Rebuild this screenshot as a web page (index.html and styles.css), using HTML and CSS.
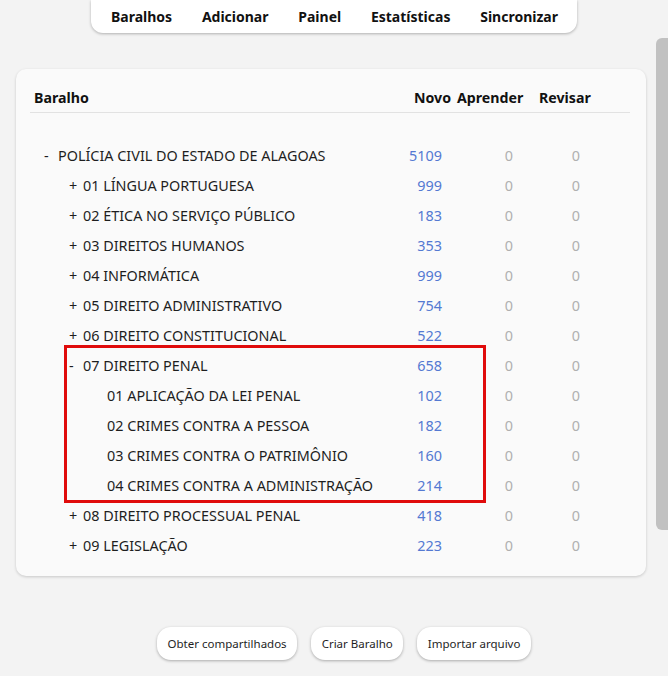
FILE: index.html
```html
<!DOCTYPE html>
<html lang="pt">
<head>
<meta charset="utf-8">
<title>Baralhos</title>
<link rel="stylesheet" href="styles.css">
</head>
<body>
<nav class="topbar">
  <a class="nav-item">Baralhos</a>
  <a class="nav-item">Adicionar</a>
  <a class="nav-item">Painel</a>
  <a class="nav-item">Estatísticas</a>
  <a class="nav-item">Sincronizar</a>
</nav>

<main class="card">
  <div class="decks">
    <div class="row head">
      <div class="c-name">Baralho</div>
      <div class="c-new">Novo</div>
      <div class="c-learn">Aprender</div>
      <div class="c-rev">Revisar</div>
    </div>
    <div class="spacer"></div>

    <div class="row"><div class="c-name l0"><span class="sign">-</span>POLÍCIA CIVIL DO ESTADO DE ALAGOAS</div><div class="c-new">5109</div><div class="c-learn">0</div><div class="c-rev">0</div></div>
    <div class="row"><div class="c-name l1"><span class="sign">+</span>01 LÍNGUA PORTUGUESA</div><div class="c-new">999</div><div class="c-learn">0</div><div class="c-rev">0</div></div>
    <div class="row"><div class="c-name l1"><span class="sign">+</span>02 ÉTICA NO SERVIÇO PÚBLICO</div><div class="c-new">183</div><div class="c-learn">0</div><div class="c-rev">0</div></div>
    <div class="row"><div class="c-name l1"><span class="sign">+</span>03 DIREITOS HUMANOS</div><div class="c-new">353</div><div class="c-learn">0</div><div class="c-rev">0</div></div>
    <div class="row"><div class="c-name l1"><span class="sign">+</span>04 INFORMÁTICA</div><div class="c-new">999</div><div class="c-learn">0</div><div class="c-rev">0</div></div>
    <div class="row"><div class="c-name l1"><span class="sign">+</span>05 DIREITO ADMINISTRATIVO</div><div class="c-new">754</div><div class="c-learn">0</div><div class="c-rev">0</div></div>
    <div class="row"><div class="c-name l1"><span class="sign">+</span>06 DIREITO CONSTITUCIONAL</div><div class="c-new">522</div><div class="c-learn">0</div><div class="c-rev">0</div></div>
    <div class="row"><div class="c-name l1"><span class="sign">-</span>07 DIREITO PENAL</div><div class="c-new">658</div><div class="c-learn">0</div><div class="c-rev">0</div></div>
    <div class="row"><div class="c-name l2"><span class="sign"></span>01 APLICAÇÃO DA LEI PENAL</div><div class="c-new">102</div><div class="c-learn">0</div><div class="c-rev">0</div></div>
    <div class="row"><div class="c-name l2"><span class="sign"></span>02 CRIMES CONTRA A PESSOA</div><div class="c-new">182</div><div class="c-learn">0</div><div class="c-rev">0</div></div>
    <div class="row"><div class="c-name l2"><span class="sign"></span>03 CRIMES CONTRA O PATRIMÔNIO</div><div class="c-new">160</div><div class="c-learn">0</div><div class="c-rev">0</div></div>
    <div class="row"><div class="c-name l2"><span class="sign"></span>04 CRIMES CONTRA A ADMINISTRAÇÃO</div><div class="c-new">214</div><div class="c-learn">0</div><div class="c-rev">0</div></div>
    <div class="row"><div class="c-name l1"><span class="sign">+</span>08 DIREITO PROCESSUAL PENAL</div><div class="c-new">418</div><div class="c-learn">0</div><div class="c-rev">0</div></div>
    <div class="row"><div class="c-name l1"><span class="sign">+</span>09 LEGISLAÇÃO</div><div class="c-new">223</div><div class="c-learn">0</div><div class="c-rev">0</div></div>
  </div>
  <div class="highlight"></div>
</main>

<footer class="actions">
  <button class="btn">Obter compartilhados</button>
  <button class="btn">Criar Baralho</button>
  <button class="btn">Importar arquivo</button>
</footer>

<div class="scrollthumb"></div>
</body>
</html>
```

FILE: styles.css
```css
html, body {
  margin: 0;
  padding: 0;
}
body {
  background: #f3f3f3;
  font-family: "Noto Sans", "Open Sans", sans-serif;
  color: #1e1e1e;
  width: 668px;
  height: 676px;
  overflow: hidden;
  position: relative;
}

.topbar {
  width: 486px;
  height: 33px;
  margin: 0 0 0 91px;
  box-sizing: border-box;
  background: #ffffff;
  border-radius: 0 0 12px 12px;
  box-shadow: 0 1px 3px rgba(0,0,0,0.28);
  display: flex;
  align-items: center;
  justify-content: space-between;
  padding: 0 19px 1px 20px;
}
.nav-item {
  font-weight: 700;
  font-size: 14px;
  color: #111;
}

.card {
  position: relative;
  margin: 36px 0 0 16px;
  width: 630px;
  box-sizing: border-box;
  background: #fafafa;
  border-radius: 10px;
  box-shadow: 0 1px 3px rgba(0,0,0,0.18);
  padding: 14px 16px 16px 14px;
}

.row {
  display: grid;
  grid-template-columns: 375px 48px 74px 73px 30px;
  height: 30px;
  align-items: center;
  font-size: 14.4px;
}
.row.head {
  height: 29px;
  font-size: 14.2px;
  font-weight: 700;
  border-bottom: 1px solid #e2e2e2;
  color: #111;
}
.head .c-name { padding-left: 4px; }
.head .c-new { text-align: right; padding-right: 2px; color: #111; }
.head .c-learn { text-align: left; padding: 0 0 0 4px; color: #111; }
.head .c-rev { text-align: left; padding: 0 0 0 12px; color: #111; }

.spacer { height: 27px; }

.c-name { white-space: nowrap; }
.c-name.l0 { padding-left: 14px; }
.c-name.l1 { padding-left: 39px; }
.c-name.l2 { padding-left: 63px; }
.sign {
  display: inline-block;
  width: 14px;
}

.c-new {
  text-align: right;
  padding-right: 11px;
  color: #5479d2;
}
.c-learn {
  text-align: right;
  padding-right: 14px;
  color: #b0b0b0;
}
.c-rev {
  text-align: right;
  padding-right: 20px;
  color: #b0b0b0;
}

.highlight {
  position: absolute;
  left: 48px;
  top: 276px;
  width: 422px;
  height: 158px;
  box-sizing: border-box;
  border: 3px solid #e00b0b;
}

.actions {
  display: flex;
  gap: 14px;
  margin: 51px 0 0 157px;
}
.btn {
  font-family: "Noto Sans", "Open Sans", sans-serif;
  font-size: 11.5px;
  color: #1e1e1e;
  background: #ffffff;
  border: none;
  margin: 0;
  border-radius: 14px;
  box-shadow: 0 1px 3px rgba(0,0,0,0.3);
  height: 33px;
  padding: 0 10.5px;
}

.scrollthumb {
  position: absolute;
  right: 0;
  top: 38px;
  width: 12px;
  height: 492px;
  background: #c1c1c1;
  border-radius: 6px 0 0 6px;
}
```
